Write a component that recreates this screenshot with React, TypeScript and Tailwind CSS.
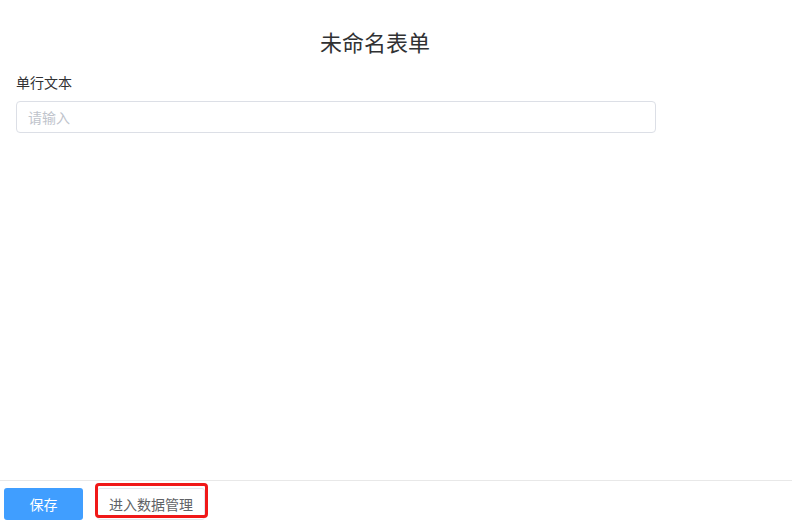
import React from "react";

export default function App() {
  const font = { fontFamily: '"Noto Sans CJK SC", "Noto Sans", sans-serif' };
  return (
    <div className="w-[793px] h-[523px] bg-white flex flex-col overflow-hidden" style={font}>
      <div className="flex-1 w-[750px]">
        <div className="pt-[26px] text-[22px] leading-[30px] text-center text-[#303133]">未命名表单</div>
        <div className="pl-4 mt-[16px] text-[14px] leading-5 text-[#303133]">单行文本</div>
        <div className="ml-4 mt-[9px] w-[640px] h-[32px] border border-[#dcdfe6] rounded-[4px] flex items-center pl-[11px]">
          <span className="text-[14px] text-[#c0c4cc]">请输入</span>
        </div>
      </div>
      <div className="h-[43px] w-[792px] border-t border-[#e8e8e8] flex items-start pt-[7px] pl-1 gap-[14px]">
        <button className="w-[79px] h-[32px] rounded-[3px] bg-[#409eff] text-white text-[14px] flex items-center justify-center">
          保存
        </button>
        <div className="relative">
          <button className="w-[108px] h-[32px] rounded-[3px] bg-white border border-[#e4e7ed] text-[#606266] text-[14px] flex items-center justify-center">
            进入数据管理
          </button>
          <div className="absolute left-[-2px] top-[-5px] w-[113px] h-[35px] border-[3px] border-[#f01818] rounded-[4px] pointer-events-none" />
        </div>
      </div>
    </div>
  );
}
